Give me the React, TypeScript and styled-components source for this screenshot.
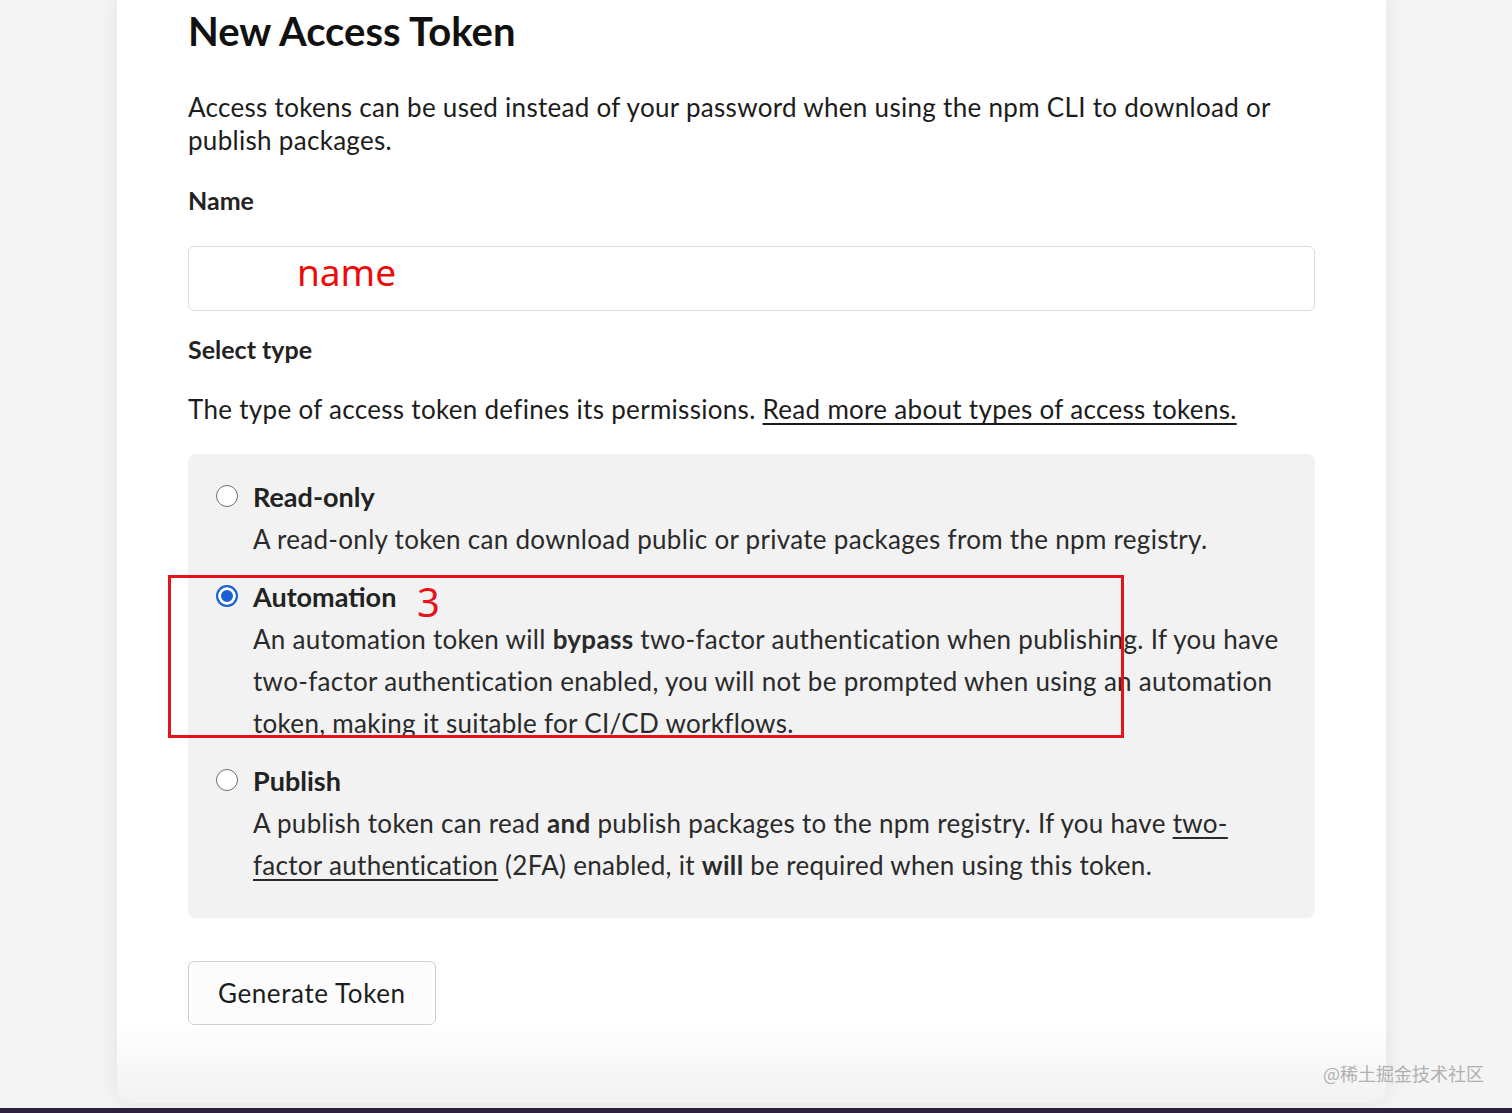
import React from "react";
import styled, {createGlobalStyle} from "styled-components";

const GlobalStyle = createGlobalStyle`
  html, body {
    margin: 0;
    padding: 0;
    background: #f4f4f4;
  }

  body {
    font-family: Lato, "Open Sans", "Noto Sans", sans-serif;
    color: #1c1c1c;
  }
`

type TokenType = 'read' | 'automation' | 'publish'

interface IOption {
    id: TokenType;
    title: string;
    body: React.ReactNode;
}

const options: IOption[] = [
    {
        id: 'read',
        title: 'Read-only',
        body: <>A read-only token can download public or private packages from the npm registry.</>,
    },
    {
        id: 'automation',
        title: 'Automation',
        body: <>An automation token will <b>bypass</b> two-factor authentication when publishing. If you have
            two-factor authentication enabled, you will not be prompted when using an automation token, making it
            suitable for CI/CD workflows.</>,
    },
    {
        id: 'publish',
        title: 'Publish',
        body: <>A publish token can read <b>and</b> publish packages to the npm registry. If you have <a
            href="#">two-factor authentication</a> (2FA) enabled, it <b>will</b> be required when using this
            token.</>,
    },
]

export default function App() {
    const selected: TokenType = 'automation'

    return (
        <Page>
            <GlobalStyle/>
            <Main>
                <Card>
                    <Title>New Access Token</Title>
                    <Intro>Access tokens can be used instead of your password when using the npm CLI to download or
                        publish packages.</Intro>
                    <Label $gap={27}>Name</Label>
                    <Input>
                        <NameHint>name</NameHint>
                    </Input>
                    <Label $gap={22}>Select type</Label>
                    <Help>The type of access token defines its permissions. <a href="#">Read more about types of access
                        tokens.</a></Help>
                    <Options>
                        {options.map(o => (
                            <Option key={o.id}>
                                <Radio checked={o.id === selected}/>
                                <OptionText>
                                    <OptionTitle>{o.title}</OptionTitle>
                                    <OptionBody>{o.body}</OptionBody>
                                </OptionText>
                            </Option>
                        ))}
                        <Highlight/>
                        <Marker>3</Marker>
                    </Options>
                    <Button>Generate Token</Button>
                </Card>
            </Main>
            <BottomBar/>
            <Watermark>@稀土掘金技术社区</Watermark>
        </Page>
    )
}

const Page = styled.div`
  position: relative;
  height: 1113px;
  display: flex;
  flex-direction: column;
  overflow: hidden;
`

const Main = styled.div`
  flex: 1;
  display: flex;
  padding-left: 117px;
  min-height: 0;
`

const Card = styled.div`
  width: 1269px;
  box-sizing: border-box;
  padding: 3px 71px 0;
  background: linear-gradient(to bottom, #fff calc(100% - 80px), #f1f1f1);
  border-radius: 0 0 14px 14px;
  box-shadow: 0 0 22px rgba(0, 0, 0, 0.08);
  margin-bottom: 5px;
`

const Title = styled.h1`
  margin: 0;
  font-size: 40px;
  line-height: 56px;
  font-weight: 700;
  color: #111;
`

const Intro = styled.p`
  margin: 32px 0 0;
  font-size: 26px;
  line-height: 33px;
  letter-spacing: 0.3px;
  max-width: 1100px;
`

const Label = styled.div<{ $gap?: number }>`
  margin-top: ${({$gap}) => $gap ?? 28}px;
  font-size: 25px;
  line-height: 33px;
  font-weight: 700;
  color: #222;
`

const Input = styled.div`
  margin-top: 29px;
  height: 65px;
  box-sizing: border-box;
  border: 1.5px solid #dcdcdc;
  border-radius: 6px;
  padding-left: 108px;
  display: flex;
  align-items: center;
`

const NameHint = styled.span`
  font-family: "Noto Sans", "Open Sans", sans-serif;
  font-size: 37px;
  line-height: 1;
  color: #ee0a0a;
  margin-top: -14px;
`

const Help = styled.p`
  margin: 27px 0 0;
  font-size: 26px;
  line-height: 33px;
  letter-spacing: 0.3px;

  & > a {
    color: inherit;
    text-decoration: underline;
    text-underline-offset: 4px;
  }
`

const Options = styled.div`
  position: relative;
  margin-top: 28px;
  background: #f2f2f2;
  border-radius: 8px;
  padding: 22px 28px 32px;
  display: flex;
  flex-direction: column;
  gap: 16px;
`

const Option = styled.div`
  display: flex;
  gap: 15px;
`

const Radio = styled.span<{ checked: boolean }>`
  flex: none;
  width: 22px;
  height: 22px;
  margin-top: 9px;
  box-sizing: border-box;
  border-radius: 50%;
  border: ${({checked}) => checked ? '2px solid #1a5fd6' : '1.5px solid #6e6e6e'};
  box-shadow: ${({checked}) => checked ? 'inset 0 0 0 3px #fff' : 'none'};
  background-color: ${({checked}) => checked ? '#1a5fd6' : '#fff'};
`

const OptionText = styled.div`
  display: flex;
  flex-direction: column;
`

const OptionTitle = styled.div`
  font-size: 27px;
  line-height: 42px;
  font-weight: 700;
  color: #222;
`

const OptionBody = styled.div`
  font-size: 26px;
  line-height: 42px;
  letter-spacing: 0.3px;
  color: #2a2a2a;

  & b {
    font-weight: 700;
  }

  & a {
    color: inherit;
    text-decoration: underline;
    text-underline-offset: 4px;
  }
`

const Highlight = styled.div`
  position: absolute;
  left: -20px;
  top: 121px;
  width: 956px;
  height: 163px;
  box-sizing: border-box;
  border: 3px solid #e5141b;
  pointer-events: none;
`

const Marker = styled.span`
  position: absolute;
  left: 229px;
  top: 128px;
  font-family: "Noto Sans", sans-serif;
  font-size: 40px;
  line-height: 1;
  color: #e5141b;
`

const Button = styled.button`
  margin-top: 43px;
  height: 64px;
  padding: 0 29px;
  font-family: inherit;
  font-size: 26px;
  letter-spacing: 0.6px;
  color: #1c1c1c;
  background: #fcfcfc;
  border: 1.5px solid #cfcfcf;
  border-radius: 6px;
`

const BottomBar = styled.div`
  height: 5px;
  flex: none;
  background: #2e1f3e;
`

const Watermark = styled.span`
  position: absolute;
  right: 28px;
  bottom: 27px;
  font-family: "Noto Sans CJK SC", sans-serif;
  font-size: 18px;
  color: #b0b0b0;
`
